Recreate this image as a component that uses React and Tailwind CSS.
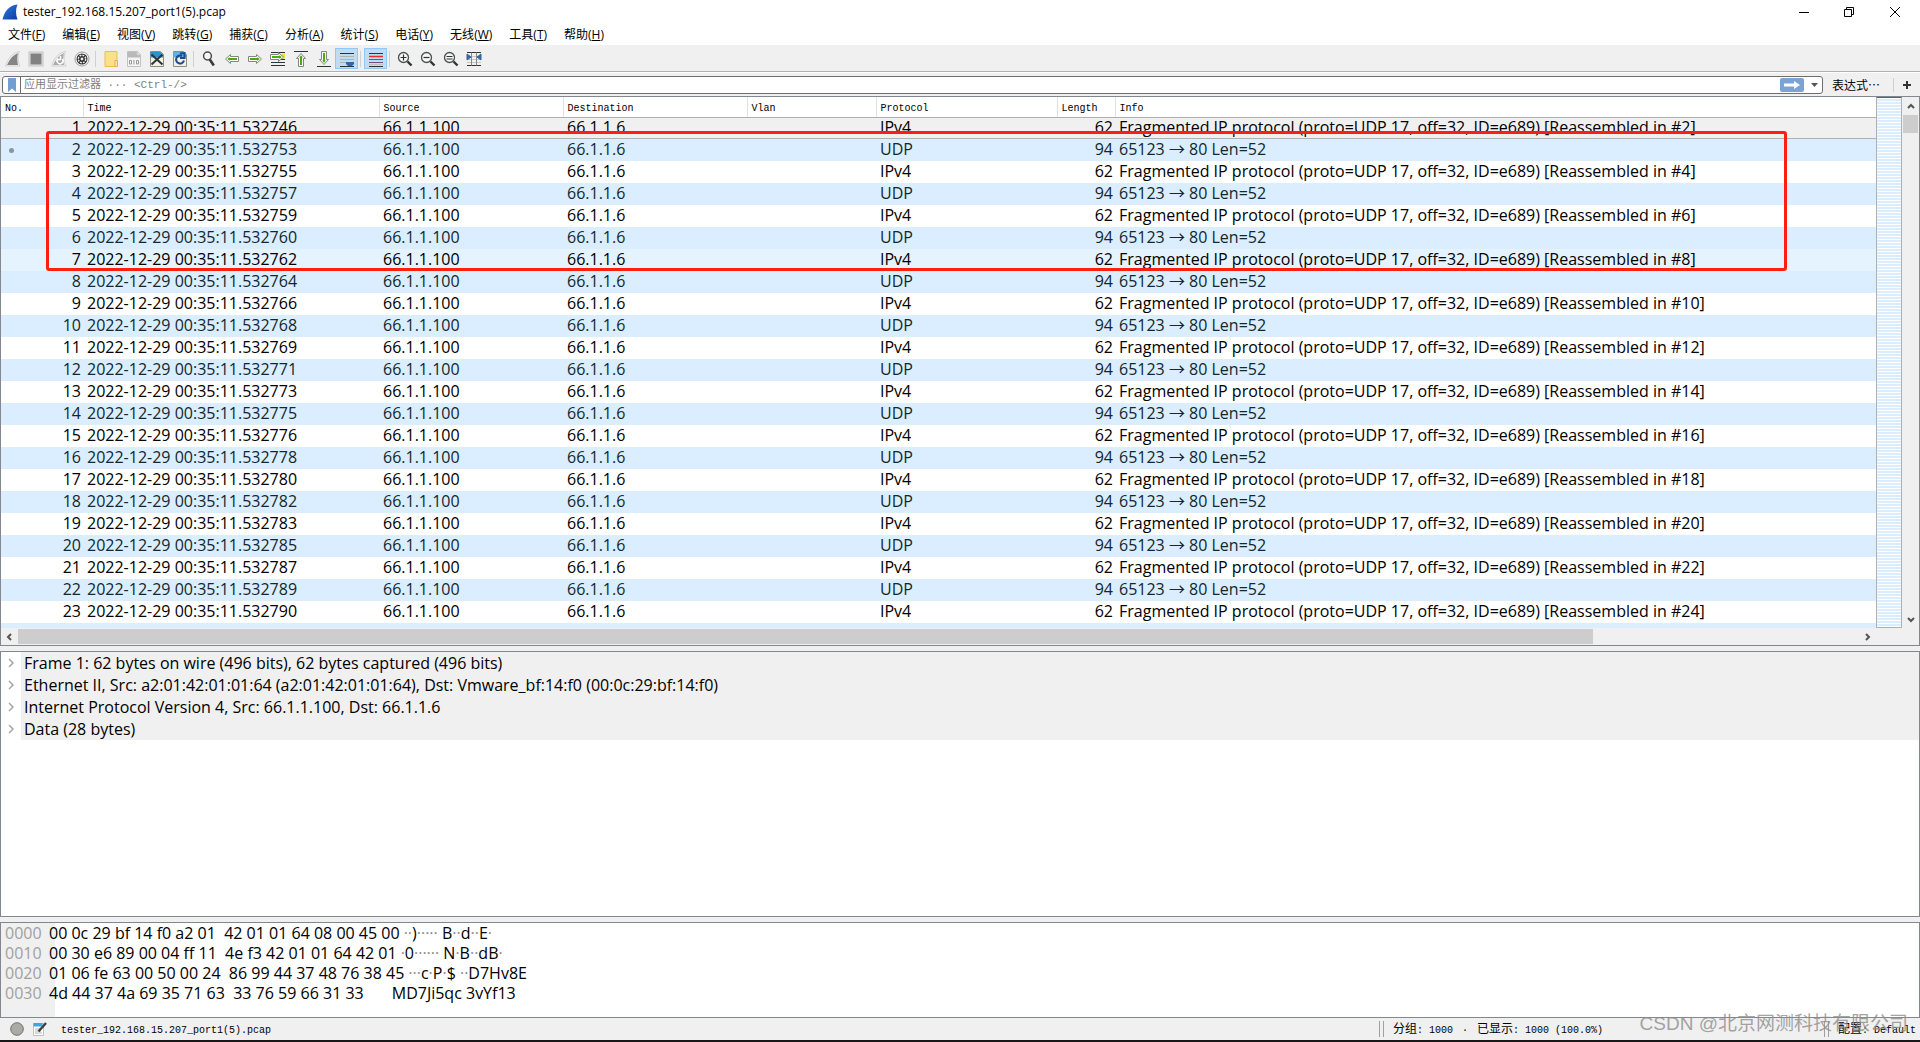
import { clsx } from "clsx";

const MENUS = [
  ["文件", "F"],
  ["编辑", "E"],
  ["视图", "V"],
  ["跳转", "G"],
  ["捕获", "C"],
  ["分析", "A"],
  ["统计", "S"],
  ["电话", "Y"],
  ["无线", "W"],
  ["工具", "T"],
  ["帮助", "H"],
];

const COLUMNS = [
  ["No.", "w-[82px]"],
  ["Time", "w-[296px]"],
  ["Source", "w-[184px]"],
  ["Destination", "w-[184px]"],
  ["Vlan", "w-[129px]"],
  ["Protocol", "w-[181px]"],
  ["Length", "w-[58px]"],
  ["Info", ""],
];

const MICROS = [
  "746", "753", "755", "757", "759", "760", "762", "764", "766", "768", "769", "771",
  "773", "775", "776", "778", "780", "782", "783", "785", "787", "789", "790",
];

const PACKETS = MICROS.map((us, i) => {
  const no = i + 1;
  const udp = no % 2 === 0;
  return {
    no,
    udp,
    time: `2022-12-29 00:35:11.532${us}`,
    protocol: udp ? "UDP" : "IPv4",
    length: udp ? 94 : 62,
    info: udp
      ? "65123 → 80 Len=52"
      : `Fragmented IP protocol (proto=UDP 17, off=32, ID=e689) [Reassembled in #${no + 1}]`,
  };
});

const DETAILS = [
  "Frame 1: 62 bytes on wire (496 bits), 62 bytes captured (496 bits)",
  "Ethernet II, Src: a2:01:42:01:01:64 (a2:01:42:01:01:64), Dst: Vmware_bf:14:f0 (00:0c:29:bf:14:f0)",
  "Internet Protocol Version 4, Src: 66.1.1.100, Dst: 66.1.1.6",
  "Data (28 bytes)",
];

const HEX = [
  ["0000", "00 0c 29 bf 14 f0 a2 01  42 01 01 64 08 00 45 00", "··)····· B··d··E·", "ml-1"],
  ["0010", "00 30 e6 89 00 04 ff 11  4e f3 42 01 01 64 42 01", "·0······ N·B··dB·", "ml-1"],
  ["0020", "01 06 fe 63 00 50 00 24  86 99 44 37 48 76 38 45", "···c·P·$ ··D7Hv8E", "ml-1"],
  ["0030", "4d 44 37 4a 69 35 71 63  33 76 59 66 31 33", "MD7Ji5qc 3vYf13", "ml-7"],
];

const uiFont = "font-['Open_Sans','Noto_Sans_CJK_SC',sans-serif]";
const monoFont = "font-['Liberation_Mono','Noto_Sans_CJK_SC',monospace]";

function AppLogo() {
  return (
    <svg viewBox="0 0 16 16" className="size-4" aria-hidden="true">
      <defs>
        <linearGradient id="fin" x1="0" y1="0" x2="1" y2="1">
          <stop offset="0" stopColor="#2f7be8" />
          <stop offset="1" stopColor="#0a3c9c" />
        </linearGradient>
      </defs>
      <path d="M0.500 15.500C2.500 7 7 1.500 15.500 0.500c-2 4.500-2 10 0 15z" fill="url(#fin)" />
    </svg>
  );
}

function ArrowShape({ rotate = 0 }) {
  return (
    <g transform={`rotate(${rotate} 8 8)`}>
      <path d="M1.500 8 6.500 3.500V5.500h8v5h-8v2z" fill="#fff" stroke="#858585" />
      <path d="M3.300 8 5.600 6V7h7.400v2H5.600v1z" fill="#4faa12" />
    </g>
  );
}

function Magnifier({ mark }) {
  return (
    <>
      <circle cx="6.500" cy="6.500" r="5" fill="#f6f6f6" stroke="#4b4f50" strokeWidth="1.300" />
      <path d={mark} stroke="#2e3436" strokeWidth="1.200" />
      <path d="M10.500 10.500l4 4" stroke="#2e3436" strokeWidth="2.400" />
    </>
  );
}

const ICONS = {
  start: (
    <>
      <path d="M0.500 15C3 7 8 1.500 14.500 0.500c-2 4.500-2 10 0.500 14.500z" fill="#f4f4f4" stroke="#d0d0d0" />
      <path d="M2 14C4.500 8 8 4 13 2c-1 4-1 8 0 12z" fill="#858585" />
    </>
  ),
  stop: (
    <>
      <rect x="1" y="1" width="14" height="14" fill="#e2e2e2" stroke="#c4c4c4" />
      <rect x="2.500" y="2.500" width="11" height="11" fill="#828282" />
    </>
  ),
  restart: (
    <>
      <path d="M0.500 15C3 7 8 1.500 14.500 0.500c-2 4.500-2 10 0.500 14.500z" fill="#f4f4f4" stroke="#d0d0d0" />
      <path d="M2 14C4.500 8 8 4 13 2c-1 4-1 8 0 12z" fill="#aaa" />
      <path d="M11.500 8a3 3 0 1 1-4.500-.5M9.500 5v3.500H6.500" fill="none" stroke="#fff" strokeWidth="1.500" />
    </>
  ),
  options: (
    <>
      <circle cx="8" cy="8" r="7" fill="#fff" stroke="#9a9a9a" />
      <circle cx="8" cy="8" r="5.500" fill="#2b2b2b" />
      <circle cx="8" cy="8" r="3.700" fill="none" stroke="#eee" strokeWidth="1.500" strokeDasharray="1.900 1" />
      <circle cx="8" cy="8" r="1.400" fill="#eee" />
    </>
  ),
  open: (
    <>
      <path d="M2 0.500h12v15H2z" fill="#fbe08a" stroke="#e9c04c" />
      <path d="M12 9.500h2.500v6H12z" fill="#fbe9ad" stroke="#e0b440" />
    </>
  ),
  save: (
    <>
      <path d="M1.500 0.500h10l3 3v12h-13z" fill="#f4f4f4" stroke="#c2c2c2" />
      <path d="M1.500 1h10l2.500 3v2.500H1.500z" fill="#b9b9b9" />
      <path d="M11 0.500v3.500h3.500" fill="#eee" stroke="#c2c2c2" />
      <path d="M3.500 9.500h2v3.500h-2zM7.900 9v4.500M10.500 9.500h2v3.500h-2z" fill="none" stroke="#999" />
    </>
  ),
  close: (
    <>
      <path d="M1.500 0.500h10l3 3v12h-13z" fill="#f3f1e4" stroke="#8d8d80" />
      <path d="M1.500 1h10l2.500 3v2.500H1.500z" fill="#2794d2" />
      <path d="M2.500 3.500l11 10M13.500 3.500l-11 10" stroke="#2e3436" strokeWidth="2" />
    </>
  ),
  reload: (
    <>
      <path d="M1.500 0.500h10l3 3v12h-13z" fill="#f3f1e4" stroke="#8d8d80" />
      <path d="M1.500 1h10l2.500 3v2.500H1.500z" fill="#58b4e4" />
      <path d="M12 9.500a4 4 0 1 1-2-4.500M8 2.500l4.500-.5v5H8" fill="none" stroke="#204a87" strokeWidth="2" />
    </>
  ),
  find: (
    <>
      <circle cx="6.500" cy="5" r="3.900" fill="#f6f6f6" stroke="#4a4a4a" strokeWidth="1.500" />
      <path d="M8.800 8.500l4 6" stroke="#3a3a3a" strokeWidth="2.600" />
    </>
  ),
  back: <ArrowShape />,
  forward: <ArrowShape rotate={180} />,
  goto: (
    <>
      <path d="M1 1.500h14M9 4.500h6M1 8.500h14M1 11.500h14M1 14.500h14" stroke="#2e3436" />
      <path d="M12 2.500h3v5h-3z" fill="#f5dc4b" />
      <g transform="translate(-1 -2)"><ArrowShape rotate={180} /></g>
    </>
  ),
  first: (
    <>
      <path d="M1 0.500h14" stroke="#2e3436" />
      <g transform="translate(0 1)"><ArrowShape rotate={90} /></g>
    </>
  ),
  last: (
    <>
      <path d="M1 15.500h14" stroke="#2e3436" />
      <g transform="translate(0 -1)"><ArrowShape rotate={270} /></g>
    </>
  ),
  autoscroll: (
    <>
      <path d="M1 2.500h14M1 15.500h14" stroke="#2e3436" />
      <path d="M1 5.500h14M1 8.500h14M1 11.500h7" stroke="#aeb4ae" />
      <path d="M7 11h8v2l-2 2H9l-2-2z" fill="#3465a4" />
    </>
  ),
  colorize: (
    <>
      <path d="M1 2.500h14M1 15.500h14" stroke="#2e3436" />
      <path d="M1 5.500h14" stroke="#ef2929" strokeWidth="1.500" />
      <path d="M1 8.500h14" stroke="#3465a4" />
      <path d="M1 11.500h14" stroke="#75507b" />
      <path d="M1 13.500h14" stroke="#c0c2bd" />
    </>
  ),
  zoomIn: <Magnifier mark="M3.500 6.500h6M6.500 3.500v6" />,
  zoomOut: <Magnifier mark="M3.500 6.500h6" />,
  zoomReset: <Magnifier mark="M3.500 5.500h6M3.500 8h6" />,
  resize: (
    <>
      <path d="M1 1.500h14M1 14.500h14" stroke="#2e3436" />
      <path d="M1 5.500h14M1 8.500h14M1 11.500h14" stroke="#c6c9c2" />
      <path d="M5.500 1.500v13M10.500 1.500v13" stroke="#888a85" />
      <path d="M1 3l4 3-4 3zM15 3l-4 3 4 3z" fill="#3465a4" stroke="#3465a4" />
    </>
  ),
};

function ToolButton({ icon, label, active }) {
  return (
    <button
      type="button"
      aria-label={label}
      className={clsx(
        "flex h-[21px] w-[23px] pl-1 pt-[3px]",
        active && "bg-[#c0dcf3] shadow-[inset_0_0_0_1px_#90c8f6]"
      )}
    >
      <svg viewBox="0 0 16 16" className="size-4 shrink-0">{ICONS[icon]}</svg>
    </button>
  );
}

function Separator() {
  return <span className="ml-[2px] mr-[3px] h-4 w-px bg-[#d0d0d0]" />;
}

function TitleBar() {
  return (
    <header className={clsx("flex h-6 shrink-0 items-center pl-[2px] text-xs", uiFont)}>
      <AppLogo />
      <h1 className="ml-[5px]">tester_192.168.15.207_port1(5).pcap</h1>
      <div className="ml-auto flex h-5">
        <button type="button" aria-label="Minimize" className="flex w-12 items-center justify-center">
          <svg viewBox="0 0 10 10" className="size-[10px]"><path d="M0 5.500h10" stroke="#000" /></svg>
        </button>
        <button type="button" aria-label="Restore" className="flex w-[42px] items-center justify-center">
          <svg viewBox="0 0 10 10" className="size-[10px]" fill="none" stroke="#000">
            <path d="M0.500 2.500h7v7h-7zM2.500 2.500v-2h7v7h-2" />
          </svg>
        </button>
        <button type="button" aria-label="Close" className="flex w-[50px] items-center justify-center">
          <svg viewBox="0 0 10 10" className="size-[10px]"><path d="M0 0l10 10M10 0L0 10" stroke="#000" /></svg>
        </button>
      </div>
    </header>
  );
}

function MenuBar() {
  return (
    <nav className={clsx("flex h-[22px] shrink-0 items-center gap-[17px] border-b border-[#f0f0f0] pl-2 text-xs", uiFont)}>
      {MENUS.map(([name, key]) => (
        <button type="button" key={key} className="whitespace-nowrap">
          {name}(<u>{key}</u>)
        </button>
      ))}
    </nav>
  );
}

function Toolbar() {
  return (
    <div className="flex h-[26px] shrink-0 items-center border-b border-[#b0b0b0] bg-[#f0f0f0] pl-px">
      <ToolButton icon="start" label="Start capture" />
      <ToolButton icon="stop" label="Stop capture" />
      <ToolButton icon="restart" label="Restart capture" />
      <ToolButton icon="options" label="Capture options" />
      <Separator />
      <ToolButton icon="open" label="Open" />
      <ToolButton icon="save" label="Save" />
      <ToolButton icon="close" label="Close file" />
      <ToolButton icon="reload" label="Reload" />
      <Separator />
      <ToolButton icon="find" label="Find packet" />
      <ToolButton icon="back" label="Previous" />
      <ToolButton icon="forward" label="Next" />
      <ToolButton icon="goto" label="Go to packet" />
      <ToolButton icon="first" label="First packet" />
      <ToolButton icon="last" label="Last packet" />
      <ToolButton icon="autoscroll" label="Auto scroll" active />
      <Separator />
      <ToolButton icon="colorize" label="Colorize" active />
      <Separator />
      <ToolButton icon="zoomIn" label="Zoom in" />
      <ToolButton icon="zoomOut" label="Zoom out" />
      <ToolButton icon="zoomReset" label="Normal size" />
      <ToolButton icon="resize" label="Resize columns" />
    </div>
  );
}

function FilterBar() {
  return (
    <div className="flex h-6 shrink-0 items-center border-t border-white bg-[#f0f0f0] pl-[2px]">
      <div className="flex h-[18px] flex-1 items-center rounded-[3px] border border-[#6e6e6e] bg-white">
        <button type="button" aria-label="Bookmarks" className="flex h-full w-[18px] items-center justify-center border-r border-[#6e6e6e]">
          <svg viewBox="0 0 10 14" className="h-[14px] w-[10px]"><path d="M1 0h8v14l-4-3.500L1 14z" fill="#729fcf" /></svg>
        </button>
        <input
          type="text"
          aria-label="Display filter"
          placeholder="应用显示过滤器 ··· <Ctrl-/>"
          className={clsx("h-full min-w-0 flex-1 pl-[3px] text-[11px] outline-none placeholder:text-[#808080]", monoFont)}
        />
        <button type="button" aria-label="Apply filter" className="flex h-[14px] w-6 items-center justify-center rounded-[2px] bg-[#7ba4d4]">
          <svg viewBox="0 0 16 8" className="h-2 w-4"><path d="M0 2.500h10V0l6 4-6 4V5.500H0z" fill="#fff" /></svg>
        </button>
        <button type="button" aria-label="Filter history" className="flex h-full w-[18px] items-center justify-center pl-1">
          <svg viewBox="0 0 7 4" className="h-1 w-[7px]"><path d="M0 0h7L3.500 4z" fill="#555" /></svg>
        </button>
      </div>
      <button type="button" className="ml-[9px] font-['Noto_Sans_CJK_SC',sans-serif] text-xs">表达式…</button>
      <span className="ml-[13px] h-[14px] w-px bg-[#cfcfcf]" />
      <button type="button" aria-label="Add filter button" className="flex w-[26px] items-center justify-center">
        <svg viewBox="0 0 8 8" className="size-2"><path d="M4 0v8M0 4h8" stroke="#333" strokeWidth="2" /></svg>
      </button>
    </div>
  );
}

function Chevron({ d, className }) {
  return (
    <svg viewBox="0 0 8 8" className={clsx("size-2 shrink-0", className)} fill="none" stroke="#555" strokeWidth="2" aria-hidden="true">
      <path d={d} />
    </svg>
  );
}

function PacketTable() {
  return (
    <table className={clsx("w-full table-fixed border-collapse whitespace-nowrap text-base leading-5", uiFont)}>
      <thead>
        <tr className={clsx("h-5 text-[10px]", monoFont)}>
          {COLUMNS.map(([name, width]) => (
            <th key={name} className={clsx("border-r border-[#e0e0e0] p-0 pl-1 pt-[3px] text-left font-normal leading-none last:border-r-0", width)}>
              {name}
            </th>
          ))}
        </tr>
      </thead>
      <tbody>
        {PACKETS.map((p) => (
          <tr
            key={p.no}
            className={clsx(
              "h-[22px] align-top",
              p.udp ? "bg-[#daeeff] text-[#12272e]" : "text-black",
              p.no === 1 && "bg-[#f0f0f0] shadow-[inset_0_1px_#b0b0b0,inset_0_-1px_#b0b0b0]",
              p.no === 7 && "bg-[#e5f3ff]"
            )}
          >
            <td className="relative p-0 pr-[2px] text-right">
              {p.no === 2 && <span className="absolute left-2 top-[9px] size-[5px] rounded-full bg-[#8a969c]" />}
              {p.no}
            </td>
            <td className="p-0 pl-1">{p.time}</td>
            <td className="p-0 pl-1">66.1.1.100</td>
            <td className="p-0 pl-1">66.1.1.6</td>
            <td className="p-0" />
            <td className="p-0 pl-1">{p.protocol}</td>
            <td className="p-0 pr-[2px] text-right">{p.length}</td>
            <td className="overflow-hidden p-0 pl-1">{p.info}</td>
          </tr>
        ))}
        <tr className="h-[22px] bg-[#daeeff]">
          <td colSpan={8} />
        </tr>
      </tbody>
    </table>
  );
}

function PacketList() {
  return (
    <section className="relative flex min-h-0 flex-[548] flex-col border border-[#828790] bg-white">
      <div className="flex min-h-0 flex-1">
        <div className="min-w-0 flex-1 overflow-hidden">
          <PacketTable />
        </div>
        {/* packet minimap */}
        <div className="w-[26px] border-x border-b border-t border-[#b0b0b0] border-t-[#0078d7] bg-[repeating-linear-gradient(to_bottom,#ffffff_0px_1px,#daeeff_1px_3px)]" />
        <div className="flex w-[17px] flex-col items-center bg-[#f0f0f0]">
          <Chevron d="M1 6l3-3 3 3" className="my-[5px]" />
          <div className="h-[18px] w-[15px] bg-[#cdcdcd]" />
          <Chevron d="M1 2l3 3 3-3" className="mb-1 mt-auto" />
        </div>
      </div>
      <div className="flex h-[17px] shrink-0 items-center bg-[#f0f0f0] pr-[43px]">
        <Chevron d="M6 1L3 4l3 3" className="ml-1 mr-[5px]" />
        <div className="flex h-full min-w-0 flex-1 py-px">
          <div className="flex-[1575] bg-[#cdcdcd]" />
          <div className="flex-[271]" />
        </div>
        <Chevron d="M2 1l3 3-3 3" className="mr-1" />
      </div>
      {/* highlighted packets */}
      <div className="pointer-events-none absolute left-[45px] right-[132px] top-[34px] h-[140px] rounded-[3px] border-3 border-[#ff1f10]" />
    </section>
  );
}

function PacketDetails() {
  return (
    <section className={clsx("min-h-0 flex-[264] overflow-hidden border border-[#828790] bg-white text-base leading-[22px]", uiFont)}>
      <ul>
        {DETAILS.map((line) => (
          <li key={line} className="flex items-center">
            <button type="button" aria-label="Expand" className="flex w-5 items-center justify-center">
              <svg viewBox="0 0 8 10" className="h-[10px] w-2" fill="none" stroke="#a6a6a6" strokeWidth="1.500"><path d="M2 1l4 4-4 4" /></svg>
            </button>
            <span className="flex-1 whitespace-nowrap bg-[#f0f0f0] pl-[3px]">{line}</span>
          </li>
        ))}
      </ul>
    </section>
  );
}

function PacketBytes() {
  return (
    <section className={clsx("min-h-0 flex-[94] overflow-hidden whitespace-pre border border-[#828790] bg-[linear-gradient(to_right,#f0f0f0_54px,#ffffff_54px)] pl-1 text-base leading-5", uiFont)}>
      {HEX.map(([offset, bytes, ascii, gap]) => (
        <div key={offset} className="flex">
          <span className="w-11 text-[#a0a0a0]">{offset}</span>
          <span>{bytes}</span>
          <span className={gap}>
            {ascii.split(/(·+)/).map((part, i) => (
              <span key={i} className={part.startsWith("·") ? "text-[#8c8c8c]" : undefined}>{part}</span>
            ))}
          </span>
        </div>
      ))}
    </section>
  );
}

function Grip() {
  return <span className="h-4 w-[5px] border-x border-[#a0a0a0]" />;
}

function StatusBar() {
  return (
    <footer className={clsx("relative flex h-6 shrink-0 items-center border-b-2 border-[#1a1718] bg-[#f0f0f0] pl-[10px] text-[10px]", monoFont)}>
      <button type="button" aria-label="Expert info">
        <svg viewBox="0 0 14 14" className="size-[14px]"><circle cx="7" cy="7" r="6.300" fill="#a9aca6" stroke="#6f716d" /></svg>
      </button>
      <button type="button" aria-label="Capture comment" className="ml-[9px]">
        <svg viewBox="0 0 14 14" className="size-[14px]">
          <path d="M0.500 1.500h10v12h-10z" fill="#fff" stroke="#c2c2b8" />
          <path d="M0.500 1h9v3.500h-9z" fill="#3ea6de" />
          <path d="M2 7h6M2 9h6M2 11h7" stroke="#b5b5b5" />
          <path d="M13 1L5.500 9.500" stroke="#3a4044" strokeWidth="2.400" />
        </svg>
      </button>
      <span className="ml-[14px] pt-[3px]">tester_192.168.15.207_port1(5).pcap</span>
      <div className="ml-auto flex w-[541px] items-center">
        <Grip />
        <span className="ml-[9px] whitespace-pre pt-[2px]">
          <span className="text-xs">分组</span>: 1000 <span className="inline-block w-3 text-center">·</span> <span className="text-xs">已显示</span>: 1000 (100.0%)
        </span>
        <span className="ml-auto flex"><Grip /></span>
        <span className="ml-[9px] mr-1 whitespace-pre pt-[2px]"><span className="text-xs">配置</span>: Default</span>
      </div>
      <p className="pointer-events-none absolute -top-1.5 right-3 font-['Liberation_Sans','Noto_Sans_CJK_SC',sans-serif] text-[19px] leading-6 text-[#8c8c8c]/80">
        CSDN @北京网测科技有限公司
      </p>
    </footer>
  );
}

export default function App() {
  return (
    <main className="flex h-screen flex-col bg-white text-black">
      <TitleBar />
      <MenuBar />
      <Toolbar />
      <FilterBar />
      <div className="flex min-h-0 flex-1 flex-col gap-[5px] bg-[#f0f0f0]">
        <PacketList />
        <PacketDetails />
        <PacketBytes />
      </div>
      <StatusBar />
    </main>
  );
}
